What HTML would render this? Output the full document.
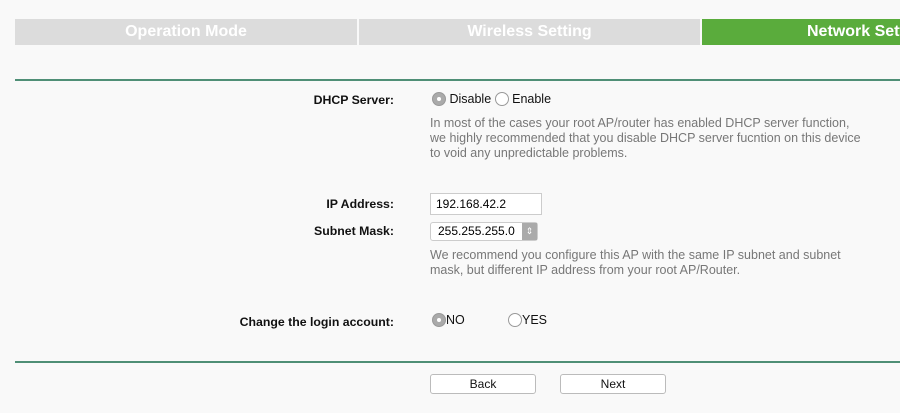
<!DOCTYPE html><html><head><style>
body{margin:0;width:900px;height:413px;background:#f9f9f9;font-family:"Liberation Sans",Arial,sans-serif;position:relative;overflow:hidden}
.a{position:absolute}
.tab{position:absolute;top:19px;height:26px;background:#dcdcdc;color:#fff;font-weight:bold;font-size:16px;text-align:center;line-height:26px;white-space:nowrap;overflow:hidden}
.line{position:absolute;left:15px;right:0;height:2px;background:#4f8f76}
.lbl{position:absolute;right:506px;font-size:12.3px;font-weight:bold;color:#111;text-align:right;white-space:nowrap}
.desc{position:absolute;left:430px;font-size:12.5px;color:#777;line-height:15px;white-space:nowrap}
.r{display:inline-block;width:14px;height:14px;border-radius:50%;border:1px solid #999;background:#fff;vertical-align:-3px;box-sizing:border-box}
.r.on{background:#aaa;border-color:#999;position:relative}
.r.on:after{content:"";position:absolute;left:4px;top:4px;width:4px;height:4px;border-radius:50%;background:#fff}
.t{font-size:12.5px;color:#111}
.btn{position:absolute;top:374px;height:18px;width:104px;border:1px solid #bbb;border-radius:3px;background:#fff;font-size:12px;text-align:center;line-height:18px;color:#111}
</style></head><body>
<div class="tab" style="left:15px;width:342px">Operation Mode</div>
<div class="tab" style="left:359px;width:341px">Wireless Setting</div>
<div class="tab" style="left:702px;width:198px;background:#5aac3c;text-align:left;padding-left:105px;box-sizing:border-box">Network Setting</div>
<div class="line" style="top:79px"></div>
<div class="lbl" style="top:93px">DHCP Server:</div>
<div class="a t" style="left:432px;top:92px"><span class="r on"></span> Disable <span class="r"></span> Enable</div>
<div class="desc" style="top:116px">In most of the cases your root AP/router has enabled DHCP server function,<br>we highly recommended that you disable DHCP server fucntion on this device<br>to void any unpredictable problems.</div>
<div class="lbl" style="top:197px">IP Address:</div>
<div class="a" style="left:430px;top:193px;width:112px;height:22px;border:1px solid #ccc;background:#fff;box-sizing:border-box;font-size:12px;line-height:20px;padding-left:5px">192.168.42.2</div>
<div class="lbl" style="top:224px">Subnet Mask:</div>
<div class="a" style="left:430px;top:222px;width:108px;height:19px;border:1px solid #ccc;border-radius:3px;background:#fff;box-sizing:border-box;font-size:12px;line-height:17px;padding-left:7px">255.255.255.0<span style="position:absolute;right:0;top:0;width:15px;height:17px;background:#aaa;color:#fff;font-size:9px;text-align:center;line-height:17px">⇕</span></div>
<div class="desc" style="top:248px">We recommend you configure this AP with the same IP subnet and subnet<br>mask, but different IP address from your root AP/Router.</div>
<div class="lbl" style="top:315px">Change the login account:</div>
<div class="a t" style="left:432px;top:313px"><span class="r on"></span>NO</div>
<div class="a t" style="left:508px;top:313px"><span class="r"></span>YES</div>
<div class="line" style="top:361px"></div>
<div class="btn" style="left:430px">Back</div>
<div class="btn" style="left:560px">Next</div>
</body></html>
